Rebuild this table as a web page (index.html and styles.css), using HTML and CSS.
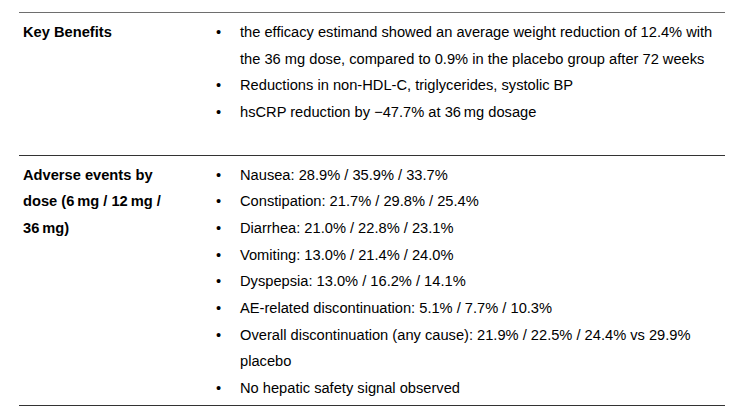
FILE: index.html
```html
<!DOCTYPE html>
<html>
<head>
<meta charset="utf-8">
<link rel="stylesheet" href="styles.css">
</head>
<body>
<table class="summary">
  <tr class="row row-first">
    <th class="label">Key Benefits</th>
    <td class="content">
      <ul class="bullets">
        <li>the efficacy estimand showed an average weight reduction of 12.4% with the 36 mg dose, compared to 0.9% in the placebo group after 72 weeks</li>
        <li>Reductions in non-HDL-C, triglycerides, systolic BP</li>
        <li>hsCRP reduction by −47.7% at 36&#8239;mg dosage</li>
      </ul>
    </td>
  </tr>
  <tr class="row row-last">
    <th class="label">Adverse events by dose (6&#8239;mg / 12&#8239;mg / 36&#8239;mg)</th>
    <td class="content">
      <ul class="bullets">
        <li>Nausea: 28.9% / 35.9% / 33.7%</li>
        <li>Constipation: 21.7% / 29.8% / 25.4%</li>
        <li>Diarrhea: 21.0% / 22.8% / 23.1%</li>
        <li>Vomiting: 13.0% / 21.4% / 24.0%</li>
        <li>Dyspepsia: 13.0% / 16.2% / 14.1%</li>
        <li>AE-related discontinuation: 5.1% / 7.7% / 10.3%</li>
        <li>Overall discontinuation (any cause): 21.9% / 22.5% / 24.4% vs 29.9% placebo</li>
        <li>No hepatic safety signal observed</li>
      </ul>
    </td>
  </tr>
</table>
</body>
</html>
```

FILE: styles.css
```css
html, body {
  margin: 0;
  padding: 0;
  background: #ffffff;
}
body {
  padding: 12px 0 0 19px;
  font-family: "Liberation Sans", Arial, sans-serif;
  font-size: 14.667px;
  line-height: 26.667px;
  color: #000;
}
.summary {
  width: 706px;
  border-collapse: collapse;
  table-layout: fixed;
  border-top: 1px solid #6e6e6e;
  border-bottom: 1px solid #333;
}
.row-first {
  border-bottom: 1px solid #333;
}
.label {
  width: 150px;
  text-align: left;
  vertical-align: top;
  font-weight: bold;
  padding: 0 0 0 4px;
}
.content {
  vertical-align: top;
  padding: 0 4px 0 0;
}
.row-first .label,
.row-first .content {
  padding-top: 6px;
  padding-bottom: 29px;
}
.row-last .label,
.row-last .content {
  padding-top: 6px;
  padding-bottom: 3px;
}
.bullets {
  list-style: none;
  margin: 0;
  padding: 0 0 0 67px;
}
.bullets li {
  position: relative;
}
.bullets li::before {
  content: "•";
  position: absolute;
  left: -24px;
}
```
